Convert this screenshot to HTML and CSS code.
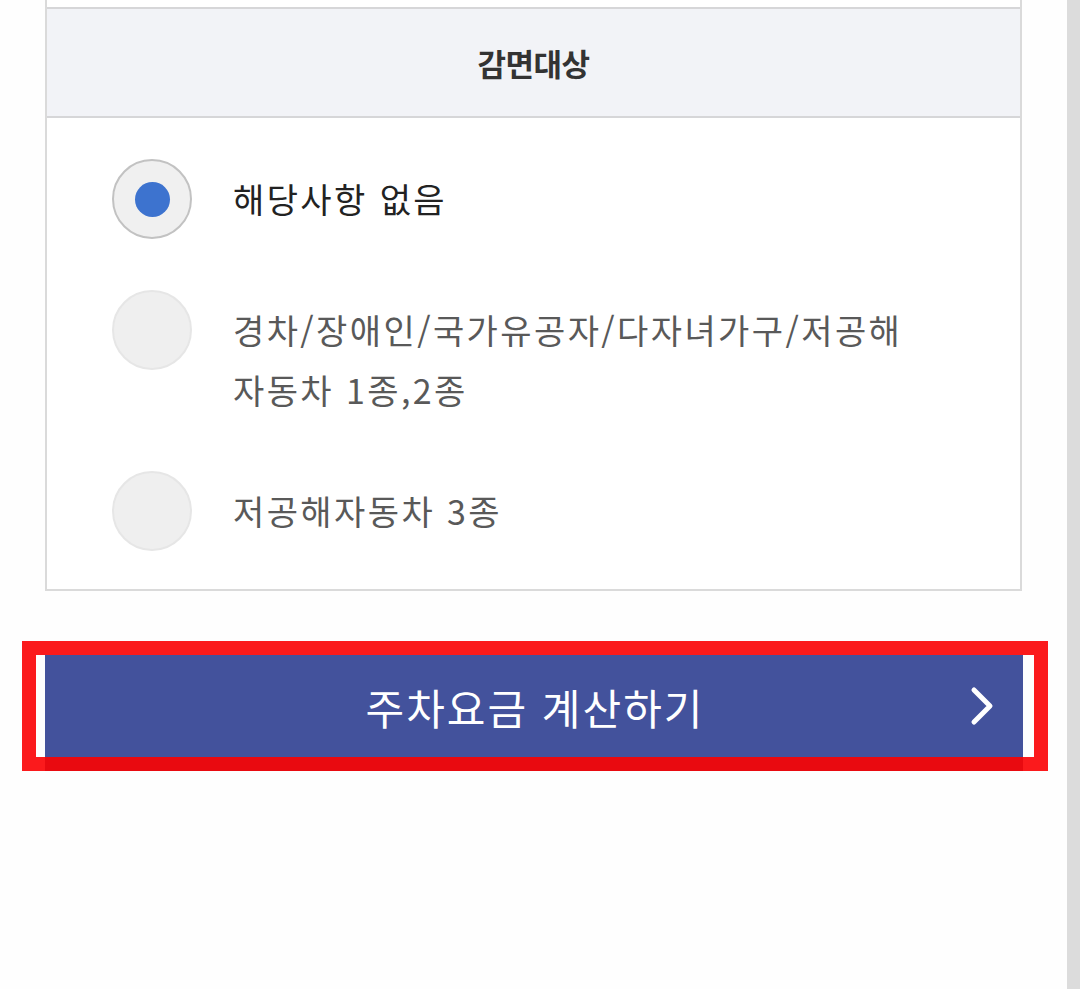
FILE: index.html
```html
<!DOCTYPE html>
<html lang="ko">
<head>
    <meta charset="UTF-8">
    <meta name="viewport" content="width=device-width, initial-scale=1.0">
    <title>주차요금 계산</title>
    <link rel="stylesheet" href="styles.css">
</head>
<body>
    <div class="page">
        <div class="content">
            <div class="card">
                <div class="card-prev"></div>
                <div class="card-head">감면대상</div>
                <div class="options">
                    <label class="option">
                        <span class="radio checked"><span class="dot"></span></span>
                        <span class="option-text dark">해당사항 없음</span>
                    </label>
                    <label class="option">
                        <span class="radio"></span>
                        <span class="option-text">경차/장애인/국가유공자/다자녀가구/저공해<br>자동차 1종,2종</span>
                    </label>
                    <label class="option">
                        <span class="radio"></span>
                        <span class="option-text">저공해자동차 3종</span>
                    </label>
                </div>
            </div>

            <div class="highlight">
                <button class="calc-btn" type="button">
                    주차요금 계산하기
                    <svg class="chevron" width="26" height="40" viewBox="0 0 26 40">
                        <path d="M5 4 L21 20 L5 36" fill="none" stroke="#fff" stroke-width="5" stroke-linecap="round" stroke-linejoin="round"/>
                    </svg>
                </button>
            </div>
        </div>
        <div class="scroll-track"></div>
    </div>
</body>
</html>
```

FILE: styles.css
```css
body {
    margin: 0;
    background: #fefefe;
    font-family: "Noto Sans CJK KR", "Noto Sans", sans-serif;
    color: #222;
}
.page {
    display: flex;
    height: 100vh;
    overflow: hidden;
}
.content {
    flex: 1;
}
.scroll-track {
    width: 13px;
    background: #dcdcdc;
}
.card {
    margin: 0 45px;
    border-left: 2px solid #dadada;
    border-right: 2px solid #dadada;
    border-bottom: 2px solid #dadada;
    background: #fff;
}
.card-prev {
    height: 7px;
}
.card-head {
    height: 107px;
    display: flex;
    align-items: center;
    justify-content: center;
    background: #f2f3f7;
    border-top: 2px solid #d6d6d8;
    border-bottom: 2px solid #d6d6d8;
    font-size: 31px;
    font-weight: bold;
    letter-spacing: -0.5px;
    color: #333;
}
.options {
    display: flex;
    flex-direction: column;
    gap: 51px;
    padding: 41px 0 38px 65px;
}
.option {
    display: flex;
    align-items: flex-start;
    gap: 41px;
}
.radio {
    flex: none;
    width: 76px;
    height: 76px;
    border-radius: 50%;
    border: 2px solid #e6e6e6;
    background: #efefef;
    display: flex;
    align-items: center;
    justify-content: center;
}
.radio.checked {
    border-color: #c2c2c2;
    background: #f0f0f0;
}
.dot {
    width: 35px;
    height: 35px;
    border-radius: 50%;
    background: #3d73cf;
}
.option-text {
    margin-top: 10px;
    font-size: 34px;
    line-height: 60px;
    letter-spacing: 2.4px;
    color: #595959;
}
.option-text.dark {
    color: #222;
}
.highlight {
    margin: 50px 19px 0 22px;
    padding: 0 11px 0 9px;
    border: 14px solid #fb1a1c;
}
.calc-btn {
    position: relative;
    display: block;
    width: 100%;
    height: 102px;
    border: none;
    background: #43529c;
    color: #fff;
    font-family: inherit;
    font-size: 42px;
    letter-spacing: 2px;
    text-indent: 2px;
    box-shadow: 0 14px 0 #e90a10;
    cursor: pointer;
}
.chevron {
    position: absolute;
    right: 28px;
    top: 31px;
}
```
